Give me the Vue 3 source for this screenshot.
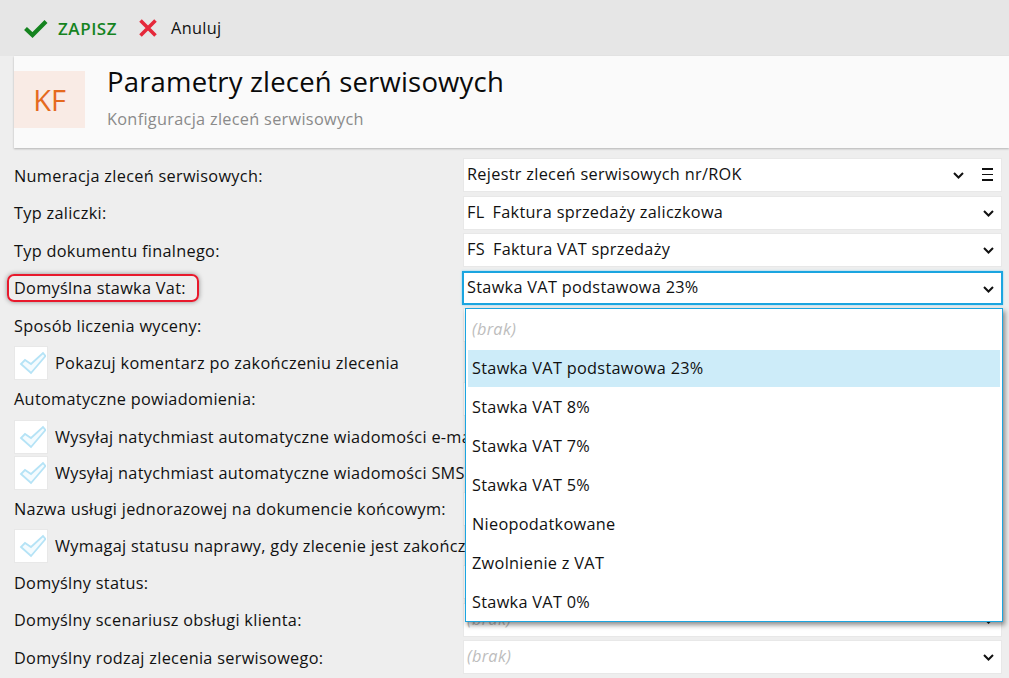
<script setup>
const rows = [
  { type: 'select', label: 'Numeracja zleceń serwisowych:', value: 'Rejestr zleceń serwisowych nr/ROK', menu: true },
  { type: 'select', label: 'Typ zaliczki:', code: 'FL', value: 'Faktura sprzedaży zaliczkowa' },
  { type: 'select', label: 'Typ dokumentu finalnego:', code: 'FS', value: 'Faktura VAT sprzedaży' },
  { type: 'select', label: 'Domyślna stawka Vat:', value: 'Stawka VAT podstawowa 23%', active: true, marked: true },
  { type: 'select', label: 'Sposób liczenia wyceny:', value: '' },
  { type: 'check', label: 'Pokazuj komentarz po zakończeniu zlecenia' },
  { type: 'select', label: 'Automatyczne powiadomienia:', value: '' },
  { type: 'check', label: 'Wysyłaj natychmiast automatyczne wiadomości e-mail' },
  { type: 'check', label: 'Wysyłaj natychmiast automatyczne wiadomości SMS' },
  { type: 'select', label: 'Nazwa usługi jednorazowej na dokumencie końcowym:', value: '' },
  { type: 'check', label: 'Wymagaj statusu naprawy, gdy zlecenie jest zakończone' },
  { type: 'select', label: 'Domyślny status:', placeholder: true },
  { type: 'select', label: 'Domyślny scenariusz obsługi klienta:', placeholder: true },
  { type: 'select', label: 'Domyślny rodzaj zlecenia serwisowego:', placeholder: true }
]
const options = [
  'Stawka VAT podstawowa 23%', 'Stawka VAT 8%', 'Stawka VAT 7%', 'Stawka VAT 5%',
  'Nieopodatkowane', 'Zwolnienie z VAT', 'Stawka VAT 0%'
]
</script>

<template>
  <div class="page">
    <div class="toolbar">
      <button class="tool save">
        <svg width="24" height="20" viewBox="0 0 24 20"><path d="M1.5 10.5 L8.5 17 L22 3.5" fill="none" stroke="#15831f" stroke-width="4.2"/></svg>
        <span>ZAPISZ</span>
      </button>
      <button class="tool cancel">
        <svg width="20" height="20" viewBox="0 0 20 20"><path d="M2.5 2.5 L17.5 17.5 M17.5 2.5 L2.5 17.5" fill="none" stroke="#e5283a" stroke-width="3.6"/></svg>
        <span>Anuluj</span>
      </button>
    </div>
    <div class="main">
      <header class="head">
        <div class="badge">KF</div>
        <div class="titles">
          <h1>Parametry zleceń serwisowych</h1>
          <p>Konfiguracja zleceń serwisowych</p>
        </div>
      </header>
      <div class="form">
        <div v-for="r in rows" :key="r.label" class="row" :class="r.type">
          <template v-if="r.type === 'select'">
            <label class="lbl"><span :class="{ marked: r.marked }">{{ r.label }}</span></label>
            <div class="field" :class="{ active: r.active }">
              <span v-if="r.code" class="code">{{ r.code }}</span>
              <span v-if="r.placeholder" class="ph">(brak)</span>
              <span v-else class="val">{{ r.value }}</span>
              <svg class="chev" :class="{ shifted: r.menu }" width="11" height="7" viewBox="0 0 11 7"><path d="M1 1 L5.5 5.5 L10 1" fill="none" stroke="#111" stroke-width="2"/></svg>
              <span v-if="r.menu" class="burger"><i></i><i></i><i></i></span>
            </div>
          </template>
          <template v-else>
            <span class="box">
              <svg width="30" height="24" viewBox="0 0 30 24"><path d="M5 13 L15 22 L29.500 5 L27 2 L15 13 L9 9 Z" fill="#f4fbfe" stroke="#b5e3f6" stroke-width="1.800"/></svg>
            </span>
            <span class="check-text">{{ r.label }}</span>
          </template>
        </div>
        <div class="dropdown">
          <div class="opt ph">(brak)</div>
          <div v-for="(o, i) in options" :key="o" class="opt" :class="{ sel: i === 0 }">{{ o }}</div>
        </div>
      </div>
    </div>
  </div>
</template>

<style>
html, body { margin: 0; background: #eeeeee; overflow: hidden; }
</style>

<style scoped>
.page {
  width: 1009px;
  height: 678px;
  overflow: hidden;
  background: #eeeeee;
  color: #111;
  font-family: "Open Sans", "Noto Sans", sans-serif;
  font-size: 16.300px;
  letter-spacing: 0.3px;
}
.toolbar {
  height: 56px;
  background: #e6e6e6;
  display: flex;
  align-items: center;
  padding-left: 24px;
  gap: 21px;
}
.tool {
  display: flex;
  align-items: center;
  border: 0;
  padding: 0;
  background: none;
  font: inherit;
  letter-spacing: inherit;
  color: #111;
}
.save { color: #15831f; font-weight: 600; gap: 10px; font-size: 17px; letter-spacing: 0.55px; }
.cancel { gap: 13px; }
.main { padding-left: 14px; }
.head {
  height: 92px;
  background: #fafafa;
  box-shadow: 0 1px 2px rgba(0, 0, 0, .25);
  display: flex;
  align-items: flex-start;
  gap: 22px;
  padding-top: 15px;
  box-sizing: border-box;
}
.badge {
  width: 71px;
  height: 57px;
  background: #f9ebe5;
  color: #e56a1f;
  font-size: 29px;
  font-weight: 500;
  line-height: 57px;
  text-align: center;
  letter-spacing: 0;
}
.titles h1 {
  margin: 0;
  font-size: 27.500px;
  font-weight: 400;
  line-height: 26px;
  color: #0a0a0a;
  letter-spacing: 0.18px;
  transform: translateY(-2px);
}
.titles p {
  margin: 12px 0 0;
  line-height: 20px;
  color: #8a8a8a;
}
.form {
  position: relative;
  padding-top: 10px;
  padding-right: 7px;
}
.row {
  display: grid;
  grid-template-columns: 449px 1fr;
  align-items: center;
  min-height: 34px;
  margin-bottom: 3.600px;
}
.row.check {
  display: flex;
  align-items: center;
  gap: 7px;
  margin-bottom: 2px;
}
.lbl { line-height: 20px; padding-top: 1px; }
.marked {
  display: inline-block;
  position: relative;
}
.marked::after {
  content: "";
  position: absolute;
  left: -7px;
  right: -13px;
  top: -4px;
  bottom: -4px;
  border: 2px solid #e8192c;
  border-radius: 7px;
  box-shadow: 0 0 5px rgba(0, 0, 0, .4);
}
.field {
  height: 34px;
  box-sizing: border-box;
  background: #fff;
  border: 1px solid #e8e8e8;
  display: flex;
  align-items: center;
  padding-left: 3px;
  padding-bottom: 2px;
  position: relative;
}
.field.active {
  border: 2px solid #1aa5e0;
  box-shadow: 0 0 2px #7fd0f2;
  margin-left: -1px;
  margin-right: -1px;
  padding-left: 3px;
  padding-bottom: 1px;
}
.code { margin-right: 8px; }
.ph { color: #bdbdbd; font-style: italic; }
.chev { position: absolute; right: 7px; top: 13px; }
.chev.shifted { right: 37px; }
.burger {
  position: absolute;
  right: 8px;
  top: 9px;
  width: 11px;
  display: flex;
  flex-direction: column;
  gap: 4px;
}
.burger i { display: block; height: 1.500px; background: #111; }
.box {
  width: 34px;
  height: 34px;
  box-sizing: border-box;
  background: #fff;
  border: 1px solid #e8e8e8;
  display: flex;
  align-items: center;
  justify-content: center;
}
.check-text { white-space: nowrap; }
.dropdown {
  position: absolute;
  left: 451px;
  top: 160px;
  width: 538px;
  height: 314px;
  box-sizing: border-box;
  background: #fff;
  border: 1px solid #1aa5e0;
  box-shadow: 2px 3px 5px rgba(0, 0, 0, .45);
  padding: 1px 2px 0;
  z-index: 2;
}
.opt {
  height: 39px;
  line-height: 39px;
  padding-left: 4px;
  box-sizing: border-box;
}
.opt.sel {
  background: #cdecf9;
  border-block: 1px solid #fff;
  line-height: 36px;
}
</style>
